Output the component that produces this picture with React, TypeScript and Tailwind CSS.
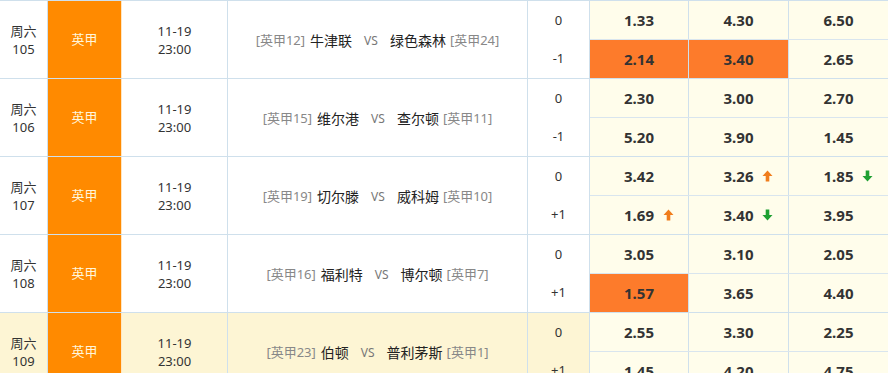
import React from "react";

type Odd = { v: string; hl?: boolean; arrow?: "up" | "down" };
type Match = {
  week: string;
  no: string;
  home: string;
  homeRank: string;
  away: string;
  awayRank: string;
  hcap: [string, string];
  odds: [Odd[], Odd[]];
  alt?: boolean;
};

const matches: Match[] = [
  {
    week: "周六",
    no: "105",
    home: "牛津联",
    homeRank: "[英甲12]",
    away: "绿色森林",
    awayRank: "[英甲24]",
    hcap: ["0", "-1"],
    odds: [
      [{ v: "1.33" }, { v: "4.30" }, { v: "6.50" }],
      [{ v: "2.14", hl: true }, { v: "3.40", hl: true }, { v: "2.65" }],
    ],
  },
  {
    week: "周六",
    no: "106",
    home: "维尔港",
    homeRank: "[英甲15]",
    away: "查尔顿",
    awayRank: "[英甲11]",
    hcap: ["0", "-1"],
    odds: [
      [{ v: "2.30" }, { v: "3.00" }, { v: "2.70" }],
      [{ v: "5.20" }, { v: "3.90" }, { v: "1.45" }],
    ],
  },
  {
    week: "周六",
    no: "107",
    home: "切尔滕",
    homeRank: "[英甲19]",
    away: "威科姆",
    awayRank: "[英甲10]",
    hcap: ["0", "+1"],
    odds: [
      [{ v: "3.42" }, { v: "3.26", arrow: "up" }, { v: "1.85", arrow: "down" }],
      [{ v: "1.69", arrow: "up" }, { v: "3.40", arrow: "down" }, { v: "3.95" }],
    ],
  },
  {
    week: "周六",
    no: "108",
    home: "福利特",
    homeRank: "[英甲16]",
    away: "博尔顿",
    awayRank: "[英甲7]",
    hcap: ["0", "+1"],
    odds: [
      [{ v: "3.05" }, { v: "3.10" }, { v: "2.05" }],
      [{ v: "1.57", hl: true }, { v: "3.65" }, { v: "4.40" }],
    ],
  },
  {
    week: "周六",
    no: "109",
    home: "伯顿",
    homeRank: "[英甲23]",
    away: "普利茅斯",
    awayRank: "[英甲1]",
    hcap: ["0", "+1"],
    odds: [
      [{ v: "2.55" }, { v: "3.30" }, { v: "2.25" }],
      [{ v: "1.45" }, { v: "4.20" }, { v: "4.75" }],
    ],
    alt: true,
  },
];

function Arrow({ dir }: { dir: "up" | "down" }) {
  const color = dir === "up" ? "#f07d1c" : "#1fa032";
  return (
    <svg
      width="11"
      height="12"
      viewBox="0 0 11 12"
      className="absolute left-full top-1/2 ml-[9px] -translate-y-1/2"
    >
      {dir === "up" ? (
        <path d="M5.5 0.5 L10.5 6 L7.3 6 L7.3 11.5 L3.7 11.5 L3.7 6 L0.5 6 Z" fill={color} />
      ) : (
        <path d="M5.5 11.5 L10.5 6 L7.3 6 L7.3 0.5 L3.7 0.5 L3.7 6 L0.5 6 Z" fill={color} />
      )}
    </svg>
  );
}

function OddCell({ o, w, last }: { o: Odd; w: string; last?: boolean }) {
  return (
    <div
      className={`${w} flex items-center justify-center ${last ? "" : "border-r border-[#cfe0ec]"} ${
        o.hl ? "bg-[#fd7b2b]" : ""
      }`}
    >
      <span className="relative text-[15px] font-bold text-[#333]">
        {o.v}
        {o.arrow ? <Arrow dir={o.arrow} /> : null}
      </span>
    </div>
  );
}

function Row({ m }: { m: Match }) {
  const left = m.alt ? "bg-[#fdf5d4]" : "bg-white";
  return (
    <div className="flex h-[78px] border-t border-[#cfe0ec]">
      <div
        className={`w-[48px] shrink-0 border-r border-[#cfe0ec] ${left} flex flex-col items-center justify-center text-[13px] leading-[18px] text-[#333]`}
      >
        <span>{m.week}</span>
        <span>{m.no}</span>
      </div>
      <div className="w-[74px] shrink-0 border-r border-[#ffe6c2] bg-[#ff8a00] flex items-center justify-center text-[13px] text-[#fff6dc]">
        英甲
      </div>
      <div
        className={`w-[106px] shrink-0 border-r border-[#cfe0ec] ${left} flex flex-col items-center justify-center text-[13px] leading-[18px] text-[#333]`}
      >
        <span>11-19</span>
        <span>23:00</span>
      </div>
      <div
        className={`w-[300px] shrink-0 border-r border-[#cfe0ec] ${left} flex items-center justify-center whitespace-nowrap pt-[2px]`}
      >
        <span className="text-[13px] text-[#888]">{m.homeRank}</span>
        <span className="ml-[5px] text-[14px] text-[#222]">{m.home}</span>
        <span className="mx-[12px] text-[12px] text-[#777]">VS</span>
        <span className="text-[14px] text-[#222]">{m.away}</span>
        <span className="ml-[4px] text-[13px] text-[#888]">{m.awayRank}</span>
      </div>
      <div
        className={`w-[62px] shrink-0 border-r border-[#cfe0ec] ${left} flex flex-col text-[13px] text-[#333]`}
      >
        <div className="flex h-[39px] items-center justify-center">{m.hcap[0]}</div>
        <div className="flex h-[38px] items-center justify-center">{m.hcap[1]}</div>
      </div>
      <div className="flex flex-1 flex-col bg-[#fffdeb]">
        {m.odds.map((line, i) => (
          <div
            key={i}
            className={`flex ${i === 0 ? "h-[39px] border-b border-[#d9e5ee]" : "h-[38px]"}`}
          >
            <OddCell o={line[0]} w="w-[99px]" />
            <OddCell o={line[1]} w="w-[100px]" />
            <OddCell o={line[2]} w="flex-1" last />
          </div>
        ))}
      </div>
    </div>
  );
}

export default function App() {
  return (
    <div
      className="h-[373px] w-[888px] overflow-hidden bg-white"
      style={{ fontFamily: '"Noto Sans", "Noto Sans CJK SC", sans-serif' }}
    >
      {matches.map((m) => (
        <Row key={m.no} m={m} />
      ))}
    </div>
  );
}
